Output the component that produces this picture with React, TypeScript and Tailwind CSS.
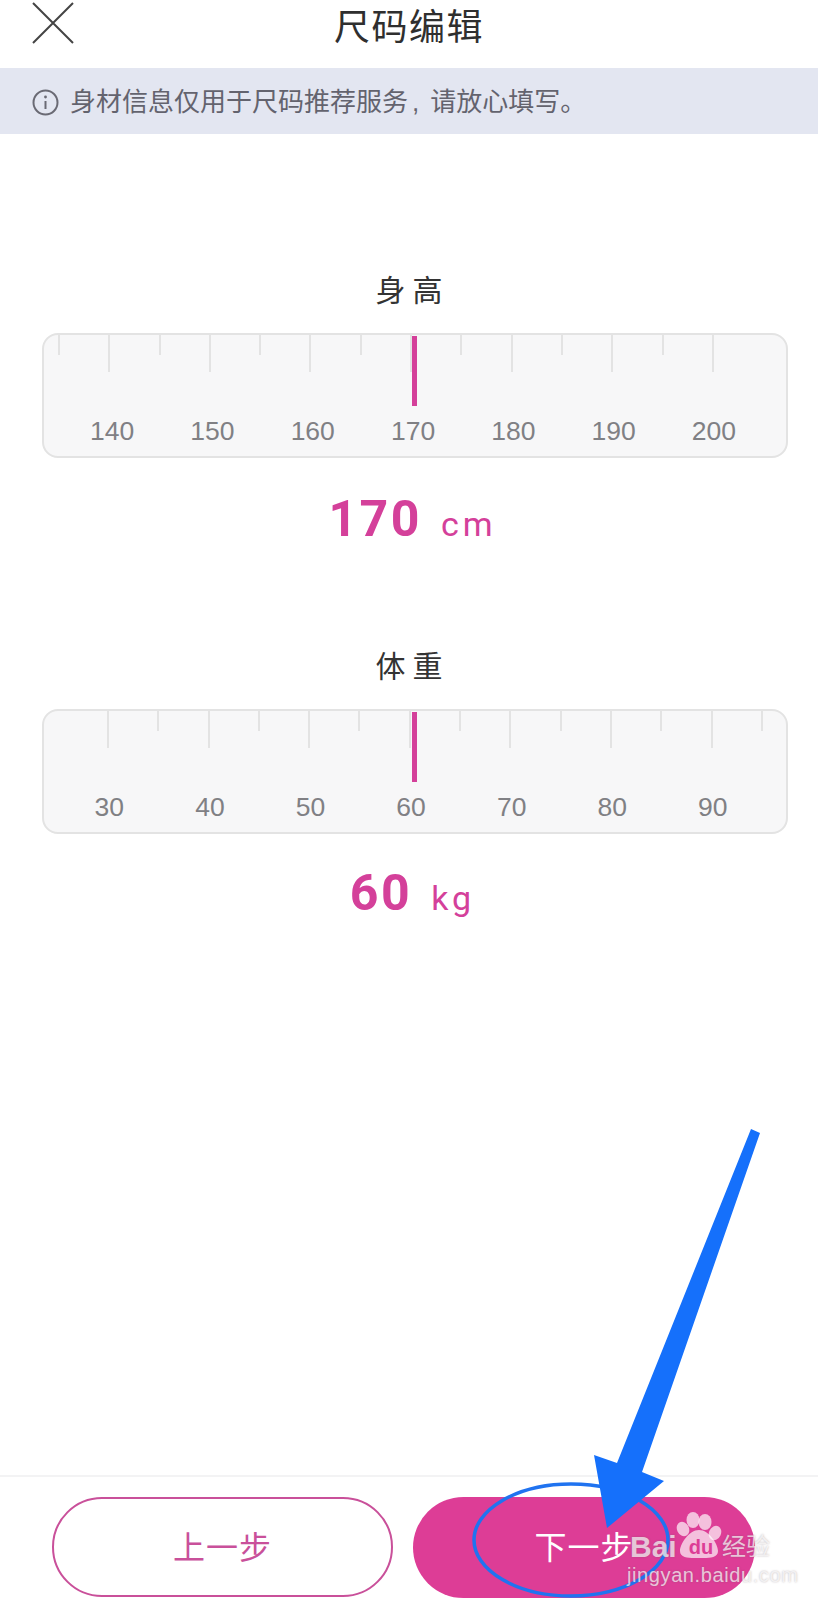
const Sans = '[font-family:"Liberation_Sans","Noto_Sans_CJK_SC",sans-serif]';

type RulerProps = {
  startLong: boolean;
  ticksPad: string;
  labelsPad: string;
  labelWidth: string;
  labels: string[];
};

function Ruler({ startLong, ticksPad, labelsPad, labelWidth, labels }: RulerProps) {
  const ticks = Array.from({ length: 14 }, (_, i) => (i % 2 === 0) === startLong);
  return (
    <div className="relative mx-[42px] flex h-[125px] w-[746px] flex-col rounded-[16px] border-2 border-[#e3e3e3] bg-[#f7f7f8]">
      <div className={`flex h-[37px] items-start gap-[48.3px] ${ticksPad}`}>
        {ticks.map((long, i) => (
          <div key={i} className={long ? "h-[37px] w-[2px] bg-[#e3e3e3]" : "h-[20px] w-[2px] bg-[#e3e3e3]"} />
        ))}
      </div>
      <div className={`mt-[44px] flex ${labelsPad}`}>
        {labels.map((l) => (
          <div key={l} className={`${labelWidth} text-center text-[26.5px] leading-[30px] text-[#808084]`}>
            {l}
          </div>
        ))}
      </div>
      <div className="absolute left-[368px] top-[1px] h-[70px] w-[5px] bg-[#d4409a]" />
    </div>
  );
}

function Value({ num, unit }: { num: string; unit: string }) {
  return (
    <div className="flex h-[60px] items-baseline justify-center pl-[7px] text-[#d4409a] [font-family:Roboto,sans-serif]">
      <span className="text-[50px] font-bold leading-[60px] tracking-[2.5px]">{num}</span>
      <span className="ml-[19px] text-[34px] leading-[60px] tracking-[4px]">{unit}</span>
    </div>
  );
}

export default function App() {
  return (
    <div className={`relative flex h-[1600px] w-[818px] flex-col overflow-hidden bg-white ${Sans}`}>
      <header className="grid h-[68px] grid-cols-[1fr_auto_1fr] items-start">
        <svg width="46" height="46" viewBox="0 0 46 46" className="ml-[30px]">
          <path d="M3 3 L43 43 M43 3 L3 43" stroke="#444444" strokeWidth="2" fill="none" />
        </svg>
        <h1 className="mt-[6px] text-[36px] font-normal leading-[44px] tracking-[1.5px] text-[#2f2f2f]">尺码编辑</h1>
        <div />
      </header>

      <div className="flex h-[66px] items-center bg-[#e3e6f1] pl-[32px] pt-[2px] text-[26px] leading-[34px] text-[#63636e]">
        <svg width="27" height="27" viewBox="0 0 27 27" className="mr-[11px] shrink-0">
          <circle cx="13.5" cy="13.5" r="12" stroke="#6a6a74" strokeWidth="2" fill="none" />
          <path d="M13.5 12 V20" stroke="#6a6a74" strokeWidth="2" />
          <circle cx="13.5" cy="8" r="1.4" fill="#6a6a74" />
        </svg>
        <span>
          身材信息仅用于尺码推荐服务<span className="ml-[4px]">,</span>
          <span className="ml-[11px]">请放心填写。</span>
        </span>
      </div>

      <main className="flex flex-1 flex-col">
        <h2 className="mt-[137px] h-[40px] pl-[7px] text-center text-[30px] font-normal leading-[40px] tracking-[7px] text-[#333333]">身高</h2>
        <div className="mt-[22px]">
          <Ruler
            startLong={false}
            ticksPad="pl-[14px]"
            labelsPad="pl-[18px]"
            labelWidth="w-[100.3px]"
            labels={["140", "150", "160", "170", "180", "190", "200"]}
          />
        </div>
        <div className="mt-[31px]">
          <Value num="170" unit="cm" />
        </div>
        <h2 className="mt-[98px] h-[40px] pl-[7px] text-center text-[30px] font-normal leading-[40px] tracking-[7px] text-[#333333]">体重</h2>
        <div className="mt-[22px]">
          <Ruler
            startLong={true}
            ticksPad="pl-[63px]"
            labelsPad="pl-[15px]"
            labelWidth="w-[100.6px]"
            labels={["30", "40", "50", "60", "70", "80", "90"]}
          />
        </div>
        <div className="mt-[29px]">
          <Value num="60" unit="kg" />
        </div>
      </main>

      <footer className="flex h-[125px] gap-[20px] border-t-2 border-[#f3f3f4] pl-[52px] pt-[20px]">
        <button className="flex h-[100px] w-[341px] items-center justify-center rounded-full border-[2.5px] border-[#c9509a] bg-white pt-[1px] text-[32px] tracking-[1px] text-[#c9509a]">
          上一步
        </button>
        <button className="flex h-[101px] w-[342px] items-center justify-center rounded-full bg-[#dd3d96] text-[32px] tracking-[1px] text-white">
          下一步
        </button>
      </footer>

      {/* annotation drawn over the screenshot */}
      <svg width="818" height="1600" viewBox="0 0 818 1600" className="pointer-events-none absolute left-0 top-0">
        <ellipse cx="571" cy="1540" rx="97" ry="56" fill="none" stroke="#2073f0" strokeWidth="3.5" />
        <polygon
          points="751,1129 760,1133 642,1472 664,1481 607,1528 594,1455 617,1463"
          fill="#1570fb"
        />
        <g fill="#ffffff" fillOpacity="0.68">
          <ellipse cx="683" cy="1529" rx="6" ry="7.5" transform="rotate(-25 683 1529)" />
          <ellipse cx="693" cy="1520" rx="6.5" ry="8" />
          <ellipse cx="705" cy="1522" rx="6.5" ry="8" />
          <ellipse cx="715" cy="1533" rx="6" ry="7.5" transform="rotate(25 715 1533)" />
          <path d="M699 1530 C709 1530 718 1544 718 1551 C718 1559 706 1558 699 1558 C692 1558 680 1559 680 1551 C680 1544 689 1530 699 1530Z" />
        </g>
      </svg>
      <div className="absolute left-[630px] top-[1530px] flex items-center text-[30px] font-bold leading-[34px] text-white/70 [text-shadow:0_0_2px_rgba(110,90,100,0.45)]">
        <span className="w-[50px]">Bai</span>
        <span className="w-[42px] text-center text-[20px] text-[#dd3d96] [text-shadow:none]">du</span>
        <span className="text-[24px] font-normal">经验</span>
      </div>
      <div className="absolute left-[627px] top-[1563px] text-[20px] leading-[24px] tracking-[0.6px] text-white/70 [text-shadow:0_0_2px_rgba(110,90,100,0.45)]">
        jingyan.baidu.com
      </div>
    </div>
  );
}
